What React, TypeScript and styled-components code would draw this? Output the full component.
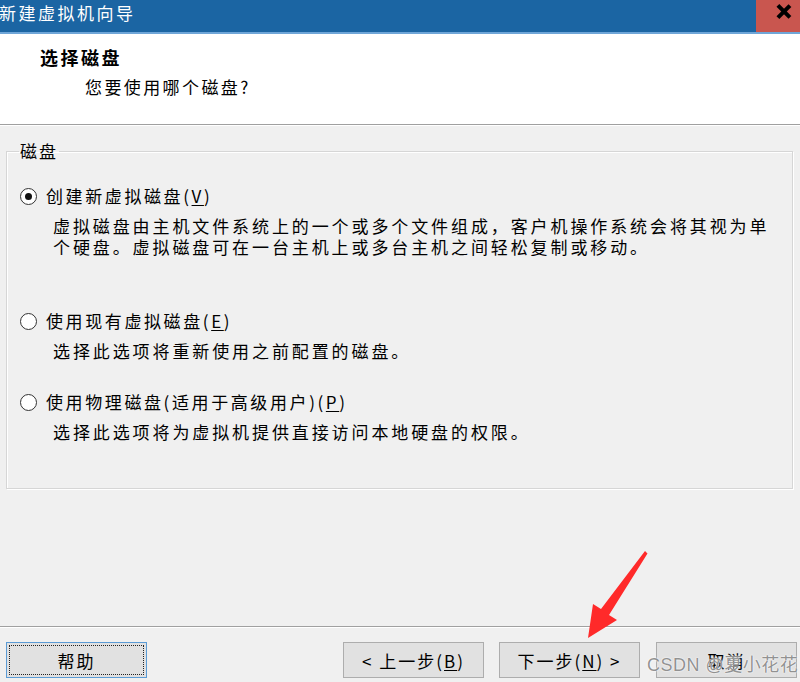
import React from "react";
import styled, { createGlobalStyle } from "styled-components";

const Global = createGlobalStyle`
  html, body { margin: 0; padding: 0; background: #f0f0f0; }
  body { width: 800px; height: 682px; overflow: hidden; font-family: "Noto Sans CJK SC", "Noto Sans", sans-serif; color: #000; }
  #root { width: 800px; height: 682px; }
`;

const Window = styled.div`
  position: relative;
  width: 800px;
  height: 682px;
  display: flex;
  flex-direction: column;
  background: #f0f0f0;
  overflow: hidden;
`;

const TitleBar = styled.div`
  height: 32px;
  flex: none;
  background: #1b65a3;
  border-bottom: 2px solid #6fa6d8;
  display: flex;
  align-items: stretch;
`;

const TitleText = styled.div`
  flex: 1;
  color: #fff;
  font-size: 17px;
  letter-spacing: 2.5px;
  line-height: 20px;
  padding-top: 3px;
  margin-left: -1px;
`;

const CloseButton = styled.div`
  width: 44px;
  flex: none;
  background: #c9564f;
  position: relative;
  &::before,
  &::after {
    content: "";
    position: absolute;
    left: 26px;
    top: 3px;
    width: 3.5px;
    height: 17px;
    background: #000;
    transform: rotate(45deg);
  }
  &::after {
    transform: rotate(-45deg);
  }
`;

const Header = styled.div`
  height: 91px;
  flex: none;
  box-sizing: border-box;
  background: #fff;
  padding: 13px 0 0 40px;
  border-bottom: 1px solid #a0a0a0;
  box-shadow: 0 1px 0 #fff;
`;

const HeaderTitle = styled.div`
  font-size: 18px;
  font-weight: 700;
  letter-spacing: 2.5px;
  line-height: 20px;
`;

const HeaderSub = styled.div`
  font-size: 17px;
  letter-spacing: 2.4px;
  line-height: 20px;
  margin: 10px 0 0 45px;
`;

const Body = styled.div`
  flex: 1;
  display: flex;
  flex-direction: column;
  padding: 16px 7px 0 6px;
`;

const Group = styled.fieldset`
  margin: 0;
  padding: 0 0 46px 0;
  border: 1px solid #d6d6d6;
  box-shadow: inset 1px 1px 0 #fff, 1px 1px 0 #fff;
  min-width: 0;
`;

const Legend = styled.legend`
  font-size: 17px;
  letter-spacing: 2px;
  line-height: 20px;
  padding: 0 1px;
  margin-left: 12px;
`;

const Option = styled.div<{ $top: number }>`
  margin-top: ${(p) => p.$top}px;
  display: flex;
  flex-direction: column;
`;

const OptionRow = styled.div`
  display: flex;
  align-items: center;
  height: 20px;
  padding-left: 13px;
`;

const Radio = styled.span<{ $checked?: boolean }>`
  width: 15px;
  height: 15px;
  border-radius: 50%;
  border: 1px solid #333;
  background: #fff;
  display: inline-flex;
  align-items: center;
  justify-content: center;
  flex: none;
  &::after {
    content: "";
    width: 7px;
    height: 7px;
    border-radius: 50%;
    background: ${(p) => (p.$checked ? "#111" : "transparent")};
  }
`;

const OptionLabel = styled.span`
  font-size: 17px;
  letter-spacing: 2.6px;
  line-height: 20px;
  margin-left: 9px;
  white-space: nowrap;
`;

const Desc = styled.div`
  font-size: 17px;
  letter-spacing: 2.9px;
  line-height: 21px;
  margin: 9px 0 0 46px;
  white-space: nowrap;
`;

const DescLine = styled.div``;

const Key = styled.u`
  text-decoration-thickness: 1px;
  text-underline-offset: 2px;
`;

const Spacer = styled.div`
  flex: 1;
`;

const Footer = styled.div`
  flex: none;
  border-top: 1px solid #a0a0a0;
  box-shadow: inset 0 1px 0 #fff;
  padding: 15px 3px 4px 6px;
  display: flex;
  align-items: center;
`;

const Button = styled.div<{ $focused?: boolean }>`
  width: 141px;
  height: 36px;
  box-sizing: border-box;
  background: #e1e1e1;
  border: 1px solid ${(p) => (p.$focused ? "#5b9bd5" : "#adadad")};
  display: flex;
  align-items: center;
  justify-content: center;
  padding: 2px;
  font-size: 17px;
  letter-spacing: 2px;
  white-space: nowrap;
`;

const FocusRing = styled.div<{ $on?: boolean }>`
  flex: 1;
  align-self: stretch;
  display: flex;
  align-items: center;
  justify-content: center;
  border: 1px dotted ${(p) => (p.$on ? "#222" : "transparent")};
`;

const ButtonGroup = styled.div<{ $gap: number; $lead?: number }>`
  display: flex;
  gap: ${(p) => p.$gap}px;
  margin-left: ${(p) => p.$lead ?? 0}px;
`;

const Watermark = styled.div`
  position: absolute;
  left: 647px;
  top: 650px;
  font-family: "Liberation Sans", "Noto Sans CJK SC", sans-serif;
  font-size: 18px;
  letter-spacing: 0.5px;
  color: rgba(110, 110, 110, 0.75);
  text-shadow: 0 0 2px #fff, 0 0 1px #fff;
  white-space: nowrap;
  pointer-events: none;
`;

const ArrowLayer = styled.svg`
  position: absolute;
  left: 560px;
  top: 540px;
  width: 100px;
  height: 110px;
  pointer-events: none;
`;

export default function App() {
  return (
    <>
      <Global />
      <Window>
        <TitleBar>
          <TitleText>新建虚拟机向导</TitleText>
          <CloseButton aria-label="关闭" />
        </TitleBar>
        <Header>
          <HeaderTitle>选择磁盘</HeaderTitle>
          <HeaderSub>您要使用哪个磁盘?</HeaderSub>
        </Header>
        <Body>
          <Group>
            <Legend>磁盘</Legend>
            <Option $top={25}>
              <OptionRow>
                <Radio $checked />
                <OptionLabel>
                  创建新虚拟磁盘(<Key>V</Key>)
                </OptionLabel>
              </OptionRow>
              <Desc>
                <DescLine>虚拟磁盘由主机文件系统上的一个或多个文件组成，客户机操作系统会将其视为单</DescLine>
                <DescLine>个硬盘。虚拟磁盘可在一台主机上或多台主机之间轻松复制或移动。</DescLine>
              </Desc>
            </Option>
            <Option $top={54}>
              <OptionRow>
                <Radio />
                <OptionLabel>
                  使用现有虚拟磁盘(<Key>E</Key>)
                </OptionLabel>
              </OptionRow>
              <Desc>选择此选项将重新使用之前配置的磁盘。</Desc>
            </Option>
            <Option $top={31}>
              <OptionRow>
                <Radio />
                <OptionLabel>
                  使用物理磁盘(适用于高级用户)(<Key>P</Key>)
                </OptionLabel>
              </OptionRow>
              <Desc>选择此选项将为虚拟机提供直接访问本地硬盘的权限。</Desc>
            </Option>
          </Group>
          <Spacer />
        </Body>
        <Footer>
          <Button $focused>
            <FocusRing $on>帮助</FocusRing>
          </Button>
          <Spacer />
          <ButtonGroup $gap={15}>
            <Button>
              <FocusRing>
                &lt; 上一步(<Key>B</Key>)
              </FocusRing>
            </Button>
            <Button>
              <FocusRing>
                下一步(<Key>N</Key>) &gt;
              </FocusRing>
            </Button>
          </ButtonGroup>
          <ButtonGroup $gap={0} $lead={16}>
            <Button>
              <FocusRing>取消</FocusRing>
            </Button>
          </ButtonGroup>
        </Footer>
        <Watermark>CSDN @夏小花花</Watermark>
        <ArrowLayer viewBox="560 540 100 110">
          <polygon
            points="645,551 647.5,553.5 609,615 617,620 588,638 593,604 601,609"
            fill="#ff2a2a"
          />
        </ArrowLayer>
      </Window>
    </>
  );
}
